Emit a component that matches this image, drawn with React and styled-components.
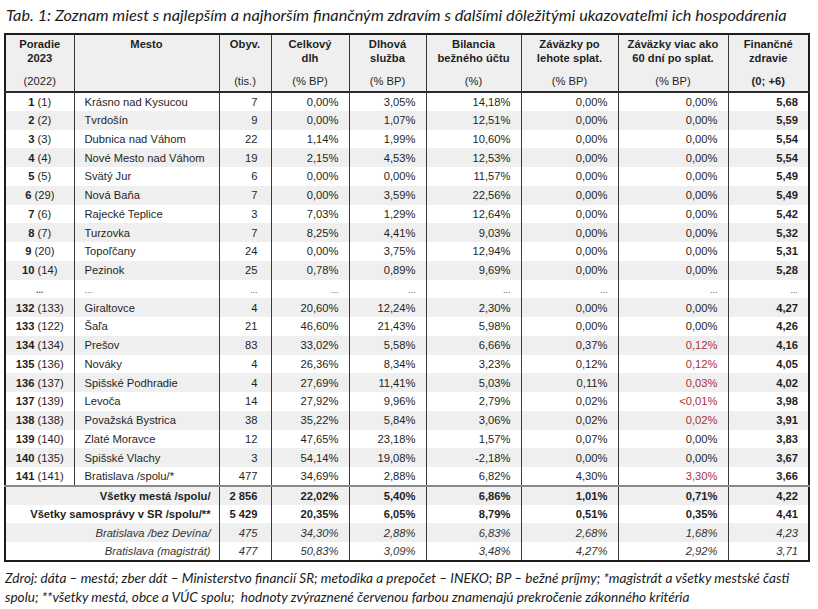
import styled, { createGlobalStyle } from "styled-components";

const GlobalStyle = createGlobalStyle`
  body {
    margin: 0;
    background: #ffffff;
    color: #1f1f1f;
  }
`;

const columns = [69, 145, 52, 78, 77, 95, 97, 110, 81];

const top = [
  ["1", "(1)", "Krásno nad Kysucou", "7", "0,00%", "3,05%", "14,18%", "0,00%", "0,00%", "5,68"],
  ["2", "(2)", "Tvrdošín", "9", "0,00%", "1,07%", "12,51%", "0,00%", "0,00%", "5,59"],
  ["3", "(3)", "Dubnica nad Váhom", "22", "1,14%", "1,99%", "10,60%", "0,00%", "0,00%", "5,54"],
  ["4", "(4)", "Nové Mesto nad Váhom", "19", "2,15%", "4,53%", "12,53%", "0,00%", "0,00%", "5,54"],
  ["5", "(5)", "Svätý Jur", "6", "0,00%", "0,00%", "11,57%", "0,00%", "0,00%", "5,49"],
  ["6", "(29)", "Nová Baňa", "7", "0,00%", "3,59%", "22,56%", "0,00%", "0,00%", "5,49"],
  ["7", "(6)", "Rajecké Teplice", "3", "7,03%", "1,29%", "12,64%", "0,00%", "0,00%", "5,42"],
  ["8", "(7)", "Turzovka", "7", "8,25%", "4,41%", "9,03%", "0,00%", "0,00%", "5,32"],
  ["9", "(20)", "Topoľčany", "24", "0,00%", "3,75%", "12,94%", "0,00%", "0,00%", "5,31"],
  ["10", "(14)", "Pezinok", "25", "0,78%", "0,89%", "9,69%", "0,00%", "0,00%", "5,28"],
];

const bottom = [
  ["132", "(133)", "Giraltovce", "4", "20,60%", "12,24%", "2,30%", "0,00%", "0,00%", "4,27"],
  ["133", "(122)", "Šaľa", "21", "46,60%", "21,43%", "5,98%", "0,00%", "0,00%", "4,26"],
  ["134", "(134)", "Prešov", "83", "33,02%", "5,58%", "6,66%", "0,37%", "0,12%", "4,16", true],
  ["135", "(136)", "Nováky", "4", "26,36%", "8,34%", "3,23%", "0,12%", "0,12%", "4,05", true],
  ["136", "(137)", "Spišské Podhradie", "4", "27,69%", "11,41%", "5,03%", "0,11%", "0,03%", "4,02", true],
  ["137", "(139)", "Levoča", "14", "27,92%", "9,96%", "2,79%", "0,02%", "<0,01%", "3,98", true],
  ["138", "(138)", "Považská Bystrica", "38", "35,22%", "5,84%", "3,06%", "0,02%", "0,02%", "3,91", true],
  ["139", "(140)", "Zlaté Moravce", "12", "47,65%", "23,18%", "1,57%", "0,07%", "0,00%", "3,83"],
  ["140", "(135)", "Spišské Vlachy", "3", "54,14%", "19,08%", "-2,18%", "0,00%", "0,00%", "3,67"],
  ["141", "(141)", "Bratislava /spolu/*", "477", "34,69%", "2,88%", "6,82%", "4,30%", "3,30%", "3,66", true],
];

const totals = [
  { label: "Všetky mestá /spolu/", kind: "bold", first: true, values: ["2 856", "22,02%", "5,40%", "6,86%", "1,01%", "0,71%", "4,22"] },
  { label: "Všetky samosprávy v SR /spolu/**", kind: "bold", values: ["5 429", "20,35%", "6,05%", "8,79%", "0,51%", "0,35%", "4,41"] },
  { label: "Bratislava /bez Devína/", kind: "italic", values: ["475", "34,30%", "2,88%", "6,83%", "2,68%", "1,68%", "4,23"] },
  { label: "Bratislava (magistrát)", kind: "italic", values: ["477", "50,83%", "3,09%", "3,48%", "4,27%", "2,92%", "3,71"] },
];

const headers = [
  ["Poradie", "2023", "(2022)"],
  ["Mesto", "", ""],
  ["Obyv.", "", "(tis.)"],
  ["Celkový", "dlh", "(% BP)"],
  ["Dlhová", "služba", "(% BP)"],
  ["Bilancia", "bežného účtu", "(%)"],
  ["Záväzky po", "lehote splat.", "(% BP)"],
  ["Záväzky viac ako", "60 dní po splat.", "(% BP)"],
  ["Finančné", "zdravie", "(0; +6)"],
];

export default function App() {
  const cityRow = (r) => (
    <Row key={r[0]}>
      <RankCell>
        <b>{r[0]}</b> {r[1]}
      </RankCell>
      <NameCell>{r[2]}</NameCell>
      <NumCell $pad={13}>{r[3]}</NumCell>
      <NumCell>{r[4]}</NumCell>
      <NumCell>{r[5]}</NumCell>
      <NumCell>{r[6]}</NumCell>
      <NumCell>{r[7]}</NumCell>
      <NumCell $red={r[10]}>{r[8]}</NumCell>
      <NumCell $bold>{r[9]}</NumCell>
    </Row>
  );

  return (
    <Page>
      <GlobalStyle />
      <Title>
        Tab. 1: Zoznam miest s najlepším a najhorším finančným zdravím s ďalšími dôležitými ukazovateľmi ich hospodárenia
      </Title>
      <Table>
        <colgroup>
          {columns.map((w, i) => (
            <col key={i} style={{ width: w }} />
          ))}
        </colgroup>
        <thead>
          <HeadRow>
            {headers.map((h, i) => (
              <HeadCell key={i}>
                {h[0]}
                <br />
                {h[1]}
              </HeadCell>
            ))}
          </HeadRow>
          <UnitRow>
            {headers.map((h, i) => (
              <UnitCell key={i} $bold={i === 8}>
                {h[2]}
              </UnitCell>
            ))}
          </UnitRow>
        </thead>
        <tbody>
          {top.map(cityRow)}
          <Row>
            <RankCell>
              <Dots $bold>...</Dots>
            </RankCell>
            <NameCell>
              <Dots>...</Dots>
            </NameCell>
            {columns.slice(2).map((_, i) => (
              <NumCell key={i} $pad={i === 0 ? 13 : 10}>
                <Dots>...</Dots>
              </NumCell>
            ))}
          </Row>
          {bottom.map(cityRow)}
          {totals.map((t) => (
            <TotalRow key={t.label} $first={t.first} $kind={t.kind}>
              <LabelCell colSpan={2}>{t.label}</LabelCell>
              {t.values.map((v, i) => (
                <NumCell key={i} $pad={i === 0 ? 13 : 10}>
                  {v}
                </NumCell>
              ))}
            </TotalRow>
          ))}
        </tbody>
      </Table>
      <Footer>
        Zdroj: dáta – mestá; zber dát – Ministerstvo financií SR; metodika a prepočet – INEKO; BP – bežné príjmy; *magistrát a všetky mestské časti
        <br />
        spolu; **všetky mestá, obce a VÚC spolu;&nbsp; hodnoty zvýraznené červenou farbou znamenajú prekročenie zákonného kritéria
      </Footer>
    </Page>
  );
}

const Page = styled.div`
  width: 804px;
  padding: 3px 10px 0 4px;
`;

const Title = styled.h1`
  margin: 0 0 7px 2px;
  font-family: "Lato", "Liberation Sans", sans-serif;
  font-style: italic;
  font-weight: 400;
  font-size: 16.3px;
  line-height: 23px;
  color: #1a1a1a;
  white-space: nowrap;
`;

const Table = styled.table`
  width: 804px;
  table-layout: fixed;
  border-collapse: collapse;
  border: 2px solid #1c1c1c;
  font-family: "Liberation Sans", Arial, sans-serif;
  font-size: 11.2px;
  color: #1f1f1f;

  td,
  th {
    border-left: 1px solid #3a3a3a;
    padding: 0;
    white-space: nowrap;
    overflow: hidden;
  }
`;

const HeadRow = styled.tr`
  background: #efefef;

  th {
    height: 32px;
  }
`;

const HeadCell = styled.th`
  vertical-align: top;
  padding-top: 3px !important;
  font-weight: 700;
  line-height: 13.5px;
  text-align: center;
`;

const UnitRow = styled.tr`
  background: #efefef;
  border-bottom: 2px solid #2a2a2a;

  td {
    height: 21px;
  }
`;

const UnitCell = styled.td`
  text-align: center;
  vertical-align: middle;
  font-weight: ${(p) => (p.$bold ? 700 : 400)};
`;

const Row = styled.tr`
  height: 18.75px;

  &:nth-child(even) {
    background: #efefef;
  }
`;

const TotalRow = styled(Row)`
  border-top: ${(p) => (p.$first ? "2px solid #8a8a8a" : "none")};
  font-weight: ${(p) => (p.$kind === "bold" ? 700 : 400)};
  font-style: ${(p) => (p.$kind === "italic" ? "italic" : "normal")};
  color: ${(p) => (p.$kind === "italic" ? "#333" : "#1f1f1f")};
`;

const RankCell = styled.td`
  text-align: center;

  b {
    font-weight: 700;
  }
`;

const NameCell = styled.td`
  padding-left: 10px !important;
  text-align: left;
`;

const LabelCell = styled.td`
  padding-right: 8px !important;
  text-align: right;
`;

const NumCell = styled.td`
  padding-right: ${(p) => p.$pad || 10}px !important;
  text-align: right;
  font-weight: ${(p) => (p.$bold ? 700 : "inherit")};
  color: ${(p) => (p.$red ? "#a8323a" : "inherit")};
`;

const Dots = styled.span`
  font-size: 9px;
  font-weight: ${(p) => (p.$bold ? 700 : 400)};
  color: #555;
`;

const Footer = styled.p`
  margin: 7px 0 0 1px;
  font-family: "Lato", "Liberation Sans", sans-serif;
  font-style: italic;
  font-size: 13.6px;
  line-height: 19px;
  color: #1a1a1a;
  width: 812px;
  white-space: nowrap;
`;
